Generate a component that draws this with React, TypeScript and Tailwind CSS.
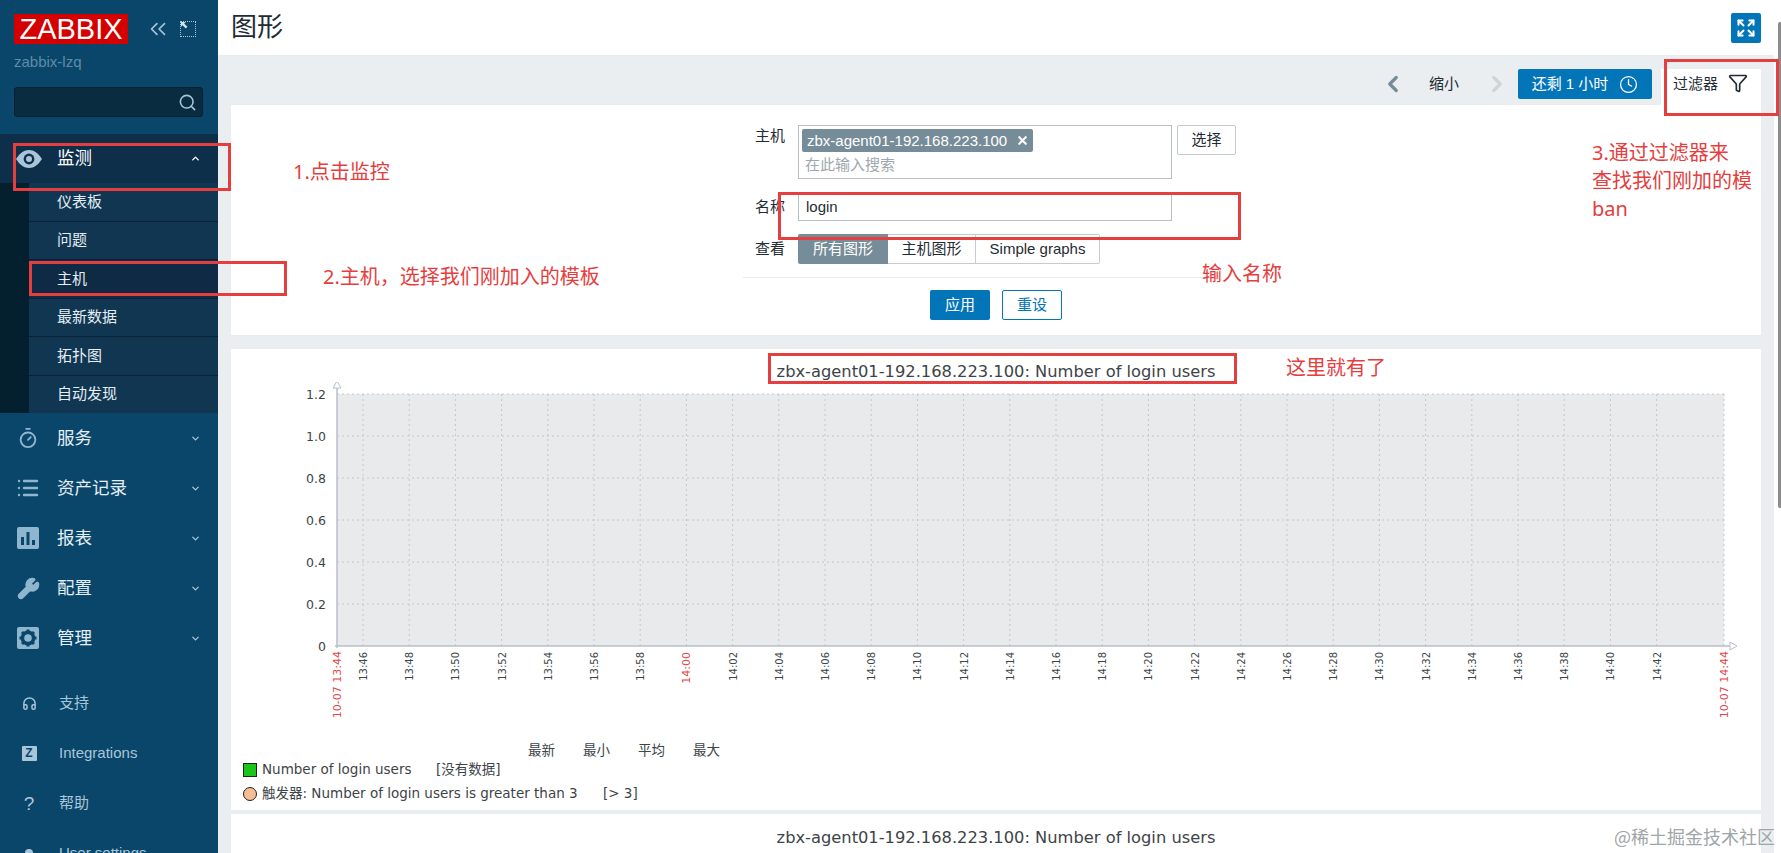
import { ChevronDown, ChevronUp, ChevronLeft, ChevronRight, Search, Timer, List, Wrench, Headphones, Funnel, Clock, X, Expand, ChevronsLeft } from "lucide-react";
import type { ReactNode } from "react";

const CJK = "font-['Liberation_Sans','Noto_Sans_CJK_SC',sans-serif]";
const CHART_FONT = "'DejaVu Sans','Noto Sans CJK SC',sans-serif";

/* ===============================
   SIDEBAR
   =============================== */

const subItems = ["仪表板", "问题", "主机", "最新数据", "拓扑图", "自动发现"];

function EyeIcon() {
  return (
    <svg viewBox="0 0 26 18" className="w-[26px] h-[18px]">
      <path d="M0 9C4 3 8 0 13 0s9 3 13 9c-4 6-8 9-13 9S4 15 0 9z" fill="#a9c6d8" />
      <circle cx="13" cy="9" r="5.4" fill="#0e2f4a" />
      <circle cx="13" cy="9" r="3" fill="#a9c6d8" />
    </svg>
  );
}

function ReportIcon() {
  return (
    <svg viewBox="0 0 24 24" className="w-[24px] h-[24px]">
      <rect x="1" y="1" width="22" height="22" rx="2" fill="#8fb6cf" />
      <rect x="5" y="11" width="3" height="8" fill="#0a466a" />
      <rect x="10.5" y="6" width="3" height="13" fill="#0a466a" />
      <rect x="16" y="14" width="3" height="5" fill="#0a466a" />
    </svg>
  );
}

function GearIcon() {
  return (
    <svg viewBox="0 0 24 24" className="w-[24px] h-[24px]">
      <rect x="1" y="1" width="22" height="22" rx="2" fill="#8fb6cf" />
      <circle cx="12" cy="12" r="5.6" fill="none" stroke="#0a466a" strokeWidth="3.6" />
      <g stroke="#0a466a" strokeWidth="3">
        <path d="M12 3.5v3M12 17.5v3M3.5 12h3M17.5 12h3M6 6l2 2M16 16l2 2M18 6l-2 2M8 16l-2 2" />
      </g>
    </svg>
  );
}

function ZIcon() {
  return (
    <div className="w-[15px] h-[15px] bg-[#a9c6d8] rounded-[1px] flex items-center justify-center text-[#0a466a] text-[12px] leading-none font-bold">
      Z
    </div>
  );
}

function MenuRow({ icon, label }: { icon: ReactNode; label: string }) {
  return (
    <div className="h-[50px] shrink-0 flex items-center pl-[16px] pr-[17px] text-[#e4eef4] text-[17.5px]">
      <div className="w-[24px] flex justify-center text-[#8fb6cf]">{icon}</div>
      <span className="ml-[17px] flex-1">{label}</span>
      <ChevronDown size={11} strokeWidth={2.5} className="text-[#b5cfdf]" />
    </div>
  );
}

function BottomRow({ icon, label }: { icon: ReactNode; label: string }) {
  return (
    <div className="h-[50px] shrink-0 flex items-center pl-[21px] text-[#a9c6d8] text-[15px]">
      <div className="w-[16px] flex justify-center">{icon}</div>
      <span className="ml-[22px]">{label}</span>
    </div>
  );
}

function Sidebar() {
  return (
    <div className="w-[218px] shrink-0 bg-[#0a466a] flex flex-col overflow-hidden">
      <div className="h-[134px] shrink-0 pl-[14px] pt-[14px]">
        <div className="flex items-center">
          <div className="w-[114px] h-[30px] bg-[#d40000] text-white text-[29px] leading-[30px] text-center font-['Liberation_Sans',sans-serif]">
            ZABBIX
          </div>
          <ChevronsLeft size={26} strokeWidth={1.5} className="ml-[17px] text-[#a9c6d8]" />
          <div className="ml-[9px] w-[16px] h-[16px] border border-dotted border-[#a9c6d8] relative">
            <svg viewBox="0 0 10 10" className="absolute left-0 top-0 w-[8px] h-[8px] text-[#d5e3ec]">
              <path d="M0 0h6L4 2l4 4-2 2-4-4-2 2z" fill="currentColor" />
            </svg>
          </div>
        </div>
        <div className="mt-[8px] text-[15px] leading-[20px] text-[#5f8ca8] font-['Liberation_Sans',sans-serif]">
          zabbix-lzq
        </div>
        <div className="mt-[15px] w-[189px] h-[30px] bg-[#0a2c41] border border-[#06202f] rounded-[3px] flex items-center justify-end pr-[5px]">
          <Search size={19} strokeWidth={2} className="text-[#a9c6d8]" />
        </div>
      </div>

      <div className="h-[279px] shrink-0 bg-[#0e2f4a] flex flex-col">
        <div className="h-[49px] flex items-center pl-[16px] pr-[17px] text-white text-[17.5px]">
          <EyeIcon />
          <span className="ml-[15px] flex-1">监测</span>
          <ChevronUp size={11} strokeWidth={3} className="text-white" />
        </div>
        <div className="flex-1 flex">
          <div className="w-[29px] bg-[#04202e]" />
          <div className="flex-1 bg-[#113652] flex flex-col">
            {subItems.map((item) => (
              <div
                key={item}
                className={`flex-1 flex items-center pl-[28px] text-[#e4eef4] text-[15px] border-b border-[#0a2238] last:border-b-0 ${
                  item === "主机" ? "bg-[#0e2a44]" : ""
                }`}
              >
                {item}
              </div>
            ))}
          </div>
        </div>
      </div>

      <MenuRow icon={<Timer size={22} strokeWidth={2} />} label="服务" />
      <MenuRow icon={<List size={24} strokeWidth={2.4} />} label="资产记录" />
      <MenuRow icon={<ReportIcon />} label="报表" />
      <MenuRow icon={<Wrench size={23} strokeWidth={2.4} fill="currentColor" />} label="配置" />
      <MenuRow icon={<GearIcon />} label="管理" />

      <div className="h-[15px] shrink-0" />
      <BottomRow icon={<Headphones size={15} strokeWidth={2.4} />} label="支持" />
      <BottomRow icon={<ZIcon />} label="Integrations" />
      <BottomRow icon={<span className="text-[19px] leading-none">?</span>} label="帮助" />
      <BottomRow icon={<div className="w-[8px] h-[8px] rounded-full bg-[#a9c6d8]" />} label="User settings" />
    </div>
  );
}

/* ===============================
   FILTER FORM
   =============================== */

function TimeBar() {
  return (
    <div className="h-[50px] shrink-0 flex items-start pt-[14px] justify-end text-[15px]">
      <ChevronLeft size={26} strokeWidth={3} className="text-[#768d99] mt-[2px]" />
      <span className="ml-[23px] w-[44px] leading-[30px] text-[#1f2c33]">缩小</span>
      <ChevronRight size={26} strokeWidth={3} className="ml-[11px] text-[#cdd5da] mt-[2px]" />
      <div className="ml-[8px] w-[134px] h-[30px] bg-[#0275b8] rounded-[2px] flex items-center justify-center text-white">
        还剩 1 小时
        <Clock size={19} strokeWidth={1.6} className="ml-[11px]" />
      </div>
      <div className="ml-[9px] w-[100px] h-[36px] bg-white flex items-start pl-[12px] pt-[6px] leading-[18px] text-[#1f2c33]">
        过滤器
        <Funnel size={20} strokeWidth={2} className="ml-[10px] -mt-[2px] text-[#1f2c33]" />
      </div>
    </div>
  );
}

function FilterPanel() {
  return (
    <div className="h-[230px] shrink-0 bg-white flex flex-col text-[15px] text-[#1f2c33]">
      <div className="flex flex-col pl-[524px] pt-[20px]">
        <div className="flex">
          <span className="w-[43px] leading-[22px]">主机</span>
          <div className="w-[374px] h-[54px] border border-[#b6bfc5] pl-[3px] pt-[3px]">
            <div className="w-[231px] h-[23px] bg-[#768d99] rounded-[2px] text-white leading-[23px] pl-[5px] flex items-center">
              zbx-agent01-192.168.223.100
              <X size={13} strokeWidth={4} className="ml-[9px]" />
            </div>
            <div className="pl-[3px] mt-[2px] leading-[22px] text-[#9ea7ac]">在此输入搜索</div>
          </div>
          <div className="ml-[5px] w-[59px] h-[30px] border border-[#c4ccd1] rounded-[2px] text-center leading-[28px]">选择</div>
        </div>
        <div className="flex mt-[13px] items-center">
          <span className="w-[43px] leading-[22px]">名称</span>
          <div className="w-[374px] h-[29px] border border-[#b6bfc5] pl-[7px] leading-[27px]">login</div>
        </div>
        <div className="flex mt-[13px] items-center">
          <span className="w-[43px] leading-[22px]">查看</span>
          <div className="flex h-[30px] leading-[28px] text-center">
            <div className="w-[90px] bg-[#768d99] text-white rounded-l-[2px] leading-[30px]">所有图形</div>
            <div className="w-[88px] border border-l-0 border-[#c4ccd1]">主机图形</div>
            <div className="w-[124px] border border-l-0 border-[#c4ccd1] rounded-r-[2px]">Simple graphs</div>
          </div>
        </div>
      </div>
      <div className="w-[470px] border-t border-[#e9ecee] mt-[13px] ml-[512px]" />
      <div className="flex mt-[12px] gap-[12px] ml-[699px]">
        <div className="w-[60px] h-[30px] bg-[#0275b8] rounded-[2px] text-white text-center leading-[30px]">应用</div>
        <div className="w-[60px] h-[30px] border border-[#0275b8] rounded-[2px] text-[#0275b8] text-center leading-[28px]">重设</div>
      </div>
    </div>
  );
}

/* ===============================
   GRAPH
   =============================== */

const minutes = [
  "13:46", "13:48", "13:50", "13:52", "13:54", "13:56", "13:58", "14:00",
  "14:02", "14:04", "14:06", "14:08", "14:10", "14:12", "14:14", "14:16",
  "14:18", "14:20", "14:22", "14:24", "14:26", "14:28", "14:30", "14:32",
  "14:34", "14:36", "14:38", "14:40", "14:42",
];
const yTicks = ["1.2", "1.0", "0.8", "0.6", "0.4", "0.2", "0"];

function Chart() {
  // x is relative to the card, y to the area below the title
  const left = 106;
  const right = 1493;
  const top = 12;
  const bottom = 264;
  const step = (bottom - top) / 6;
  return (
    <svg width="1530" height="359" viewBox="0 0 1530 359" className="block" style={{ fontFamily: CHART_FONT }}>
      <rect x={left} y={top} width={right - left} height={bottom - top} fill="#e9eaeb" />
      {yTicks.map((t, i) => (
        <g key={t}>
          {i < 6 && (
            <line x1={left} x2={right} y1={top + i * step} y2={top + i * step} stroke="#c4c8cb" strokeDasharray="2 3" />
          )}
          <text x={left - 11} y={top + i * step + 5} textAnchor="end" fontSize="12.5" fill="#3d4448">
            {t}
          </text>
        </g>
      ))}
      {minutes.map((m, i) => {
        const x = 132 + i * 46.2;
        const red = m === "14:00";
        return (
          <g key={m}>
            <line x1={x} x2={x} y1={top} y2={bottom} stroke="#c4c8cb" strokeDasharray="2 3" />
            <text
              transform={`translate(${x + 4} ${bottom + 6}) rotate(-90)`}
              textAnchor="end"
              fontSize={red ? 11 : 10}
              fill={red ? "#e0474c" : "#3d4448"}
            >
              {m}
            </text>
          </g>
        );
      })}
      <line x1={right} x2={right} y1={top} y2={bottom} stroke="#c4c8cb" strokeDasharray="2 3" />
      <line x1={left} x2={left} y1={top - 6} y2={bottom + 2} stroke="#b8bec9" strokeWidth="1.5" />
      <line x1={left - 2} x2={right + 6} y1={bottom} y2={bottom} stroke="#b8bec9" strokeWidth="1.5" />
      <path d={`M${left - 4} ${top - 6}L${left} ${top - 13}L${left + 4} ${top - 6}Z`} fill="#fff" stroke="#b8bec9" />
      <path d={`M${right + 6} ${bottom - 4}L${right + 13} ${bottom}L${right + 6} ${bottom + 4}Z`} fill="#fff" stroke="#b8bec9" />
      <text transform={`translate(${left + 4} ${bottom + 5}) rotate(-90)`} textAnchor="end" fontSize="11" fill="#e0474c">
        10-07 13:44
      </text>
      <text transform={`translate(${right + 4} ${bottom + 5}) rotate(-90)`} textAnchor="end" fontSize="11" fill="#e0474c">
        10-07 14:44
      </text>
    </svg>
  );
}

function GraphCard() {
  return (
    <div className="h-[461px] shrink-0 bg-white mt-[14px] overflow-hidden" style={{ fontFamily: CHART_FONT }}>
      <div className="pt-[13px] h-[33px] text-center text-[16.3px] leading-[20px] text-[#3d4448]">
        zbx-agent01-192.168.223.100: Number of login users
      </div>
      <Chart />
      <div className="h-[19px] ml-[297px] flex text-[13.5px] leading-[19px] text-[#3d4448]">
        <span className="w-[55px]">最新</span>
        <span className="w-[55px]">最小</span>
        <span className="w-[55px]">平均</span>
        <span>最大</span>
      </div>
      <div className="ml-[12px] flex items-center h-[19px] text-[13.5px] text-[#3d4448]">
        <span className="w-[14px] h-[14px] bg-[#1bc61b] border border-[#222]" />
        <span className="ml-[5px] w-[174px]">Number of login users</span>
        <span>[没有数据]</span>
      </div>
      <div className="mt-[5px] ml-[12px] flex items-center h-[19px] text-[13.5px] text-[#3d4448]">
        <span className="w-[14px] h-[14px] rounded-full bg-[#f5bd95] border border-[#222]" />
        <span className="ml-[5px] w-[341px]">
          <b className="font-normal">触发器:</b> Number of login users is greater than 3
        </span>
        <span>[&gt; 3]</span>
      </div>
    </div>
  );
}

/* ===============================
   ANNOTATIONS
   =============================== */

function Box({ className }: { className: string }) {
  return <div className={`absolute border-[3px] border-[#e53e3e] ${className}`} />;
}

function Note({ className, children }: { className: string; children: ReactNode }) {
  return (
    <div className={`absolute text-[#e53e3e] text-[20px] font-['Noto_Sans','Noto_Sans_CJK_SC',sans-serif] ${className}`}>
      {children}
    </div>
  );
}

export default function App() {
  return (
    <div className={`relative w-[1781px] h-[853px] overflow-hidden flex bg-white ${CJK}`}>
      <Sidebar />

      <div className="flex-1 min-w-0 flex flex-col">
        <div className="h-[55px] shrink-0 bg-white flex items-center justify-between pl-[13px] pr-[20px]">
          <h1 className="text-[26px] text-[#1f2c33]">图形</h1>
          <div className="w-[30px] h-[30px] bg-[#0275b8] rounded-[2px] flex items-center justify-center text-white">
            <Expand size={20} strokeWidth={2.4} />
          </div>
        </div>
        <div className="flex-1 min-h-0 flex">
          <div className="flex-1 min-w-0 bg-[#ebeef0] pl-[13px] pr-[13px] overflow-hidden flex flex-col">
            <TimeBar />
            <FilterPanel />
            <GraphCard />
            <div className="h-[60px] shrink-0 bg-white mt-[4px] text-center pt-[14px] text-[16.3px] leading-[20px] text-[#3d4448] font-['DejaVu_Sans',sans-serif]">
              zbx-agent01-192.168.223.100: Number of login users
            </div>
          </div>
          <div className="w-[7px] shrink-0 bg-white" />
        </div>
      </div>

      {/* page scrollbar thumb */}
      <div className="absolute right-0 top-[22px] w-[3px] h-[486px] bg-[#8c8c8c] rounded-l-[2px]" />

      {/* red markup drawn over the screenshot */}
      <Box className="left-[13px] top-[143px] w-[218px] h-[48px]" />
      <Box className="left-[29px] top-[261px] w-[258px] h-[35px]" />
      <Box className="left-[1664px] top-[59px] w-[115px] h-[57px]" />
      <Box className="left-[778px] top-[192px] w-[463px] h-[48px]" />
      <Box className="left-[768px] top-[353px] w-[469px] h-[31px]" />
      <Note className="left-[293px] top-[156px] leading-[31px]">1.点击监控</Note>
      <Note className="left-[323px] top-[261px] leading-[31px]">2.主机，选择我们刚加入的模板</Note>
      <Note className="left-[1592px] top-[139px] w-[180px] leading-[28px]">
        3.通过过滤器来
        <br />
        查找我们刚加的模
        <br />
        ban
      </Note>
      <Note className="left-[1202px] top-[258px] leading-[31px]">输入名称</Note>
      <Note className="left-[1286px] top-[352px] leading-[31px]">这里就有了</Note>
      <div className="absolute right-[6px] bottom-[4px] text-[18px] leading-[26px] text-[#a0a5a8] font-['Noto_Sans_CJK_SC',sans-serif]">
        @稀土掘金技术社区
      </div>
    </div>
  );
}
